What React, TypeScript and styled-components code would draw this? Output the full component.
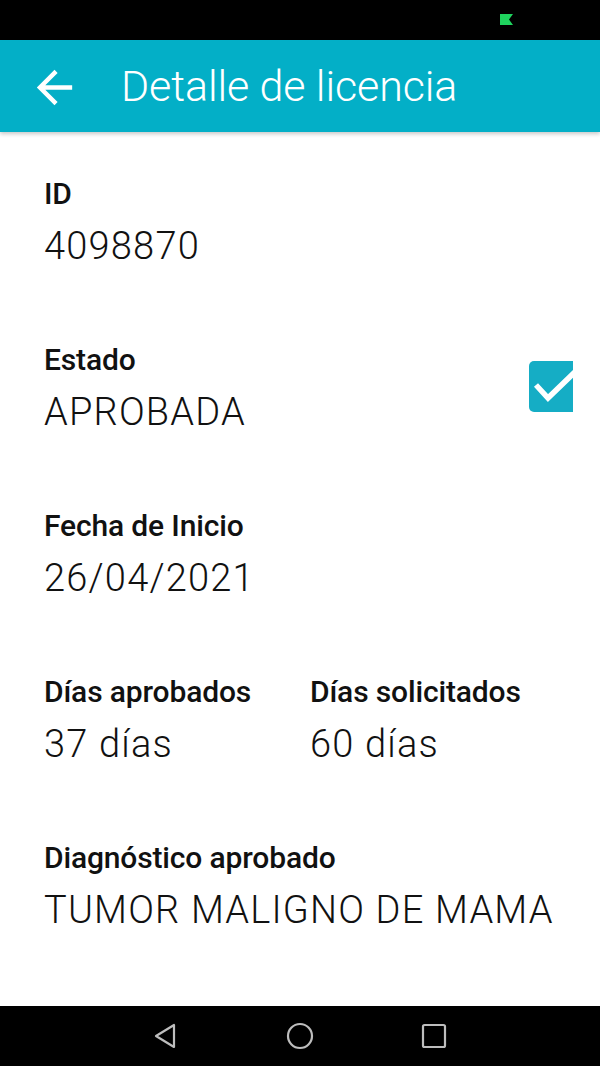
import React from "react";
import styled, { createGlobalStyle } from "styled-components";

const Global = createGlobalStyle`
  html, body { margin: 0; padding: 0; background: #ffffff; }
  body { font-family: Roboto, "Liberation Sans", sans-serif; }
  * { box-sizing: border-box; }
`;

const Screen = styled.div`
  width: 600px;
  height: 1066px;
  display: flex;
  flex-direction: column;
  background: #ffffff;
  overflow: hidden;
`;

const StatusBar = styled.div`
  height: 40px;
  flex: none;
  background: #000000;
  display: flex;
  align-items: flex-start;
  padding: 14px 0 0 500px;
`;

const AppBar = styled.header`
  height: 92px;
  flex: none;
  background: #03afc7;
  display: flex;
  align-items: center;
  padding-left: 28px;
  box-shadow: 0 2px 4px rgba(0, 0, 0, 0.22);
  position: relative;
  z-index: 1;
`;

const BackButton = styled.div`
  width: 53px;
  height: 53px;
  display: flex;
  margin-top: 2px;
  margin-right: 40px;
`;

const Title = styled.h1`
  margin: 0;
  font-family: Roboto, "Liberation Sans", sans-serif;
  font-weight: 300;
  font-size: 43px;
  letter-spacing: -0.1px;
  color: #ffffff;
`;

const Content = styled.main`
  flex: 1;
  display: flex;
  flex-direction: column;
  gap: 73px;
  padding: 44px 27px 0 44px;
`;

const Field = styled.div`
  display: flex;
  flex-direction: column;
  gap: 11px;
`;

const Label = styled.div`
  font-family: Roboto, "Liberation Sans", sans-serif;
  font-weight: 500;
  font-size: 30px;
  line-height: 36px;
  color: #111111;
  letter-spacing: -0.15px;
`;

const Value = styled.div`
  font-family: Roboto, "Liberation Sans", sans-serif;
  font-weight: 300;
  font-size: 38px;
  line-height: 46px;
  color: #111111;
  letter-spacing: 1.2px;
`;

const StatusRow = styled.div`
  display: flex;
  justify-content: space-between;
  align-items: center;
`;

const CheckBox = styled.div`
  width: 44px;
  height: 51px;
  margin-top: -5px;
  background: #15adc5;
  border-radius: 5px 0 0 5px;
  overflow: hidden;
  display: flex;
`;

const TwoCols = styled.div`
  display: grid;
  grid-template-columns: 266px 1fr;
`;

const NavBar = styled.nav`
  height: 60px;
  flex: none;
  background: #000000;
  display: flex;
  align-items: center;
  justify-content: center;
  gap: 106px;
`;

const NavIcon = styled.div`
  width: 28px;
  height: 28px;
  display: flex;
`;

export default function App() {
  return (
    <>
      <Global />
      <Screen>
        <StatusBar>
          <svg width="13" height="11" viewBox="0 0 13 11">
            <polygon points="0,0 13,0 9,5.5 13,11 0,11" fill="#1fd35e" />
          </svg>
        </StatusBar>
        <AppBar>
          <BackButton>
            <svg width="53" height="53" viewBox="0 0 24 24">
              <path
                d="M20 11H7.83l5.59-5.59L12 4l-8 8 8 8 1.41-1.41L7.83 13H20v-2z"
                fill="#ffffff"
              />
            </svg>
          </BackButton>
          <Title>Detalle de licencia</Title>
        </AppBar>
        <Content>
          <Field>
            <Label>ID</Label>
            <Value>4098870</Value>
          </Field>
          <StatusRow>
            <Field>
              <Label>Estado</Label>
              <Value>APROBADA</Value>
            </Field>
            <CheckBox>
              <svg width="44" height="51" viewBox="0 0 44 51">
                <polyline
                  points="7,24 19,37 46,11"
                  fill="none"
                  stroke="#ffffff"
                  strokeWidth="5.5"
                />
              </svg>
            </CheckBox>
          </StatusRow>
          <Field>
            <Label>Fecha de Inicio</Label>
            <Value>26/04/2021</Value>
          </Field>
          <TwoCols>
            <Field>
              <Label>Días aprobados</Label>
              <Value>37 días</Value>
            </Field>
            <Field>
              <Label>Días solicitados</Label>
              <Value>60 días</Value>
            </Field>
          </TwoCols>
          <Field>
            <Label>Diagnóstico aprobado</Label>
            <Value>TUMOR MALIGNO DE MAMA</Value>
          </Field>
        </Content>
        <NavBar>
          <NavIcon>
            <svg width="28" height="28" viewBox="0 0 28 28">
              <path
                d="M22 3 L22 25 L4 14 Z"
                fill="none"
                stroke="#bdbdbd"
                strokeWidth="2.2"
                strokeLinejoin="round"
              />
            </svg>
          </NavIcon>
          <NavIcon>
            <svg width="28" height="28" viewBox="0 0 28 28">
              <circle cx="14" cy="14" r="12" fill="none" stroke="#bdbdbd" strokeWidth="2.2" />
            </svg>
          </NavIcon>
          <NavIcon>
            <svg width="28" height="28" viewBox="0 0 28 28">
              <rect x="3" y="3" width="22" height="22" rx="1.5" fill="none" stroke="#bdbdbd" strokeWidth="2.2" />
            </svg>
          </NavIcon>
        </NavBar>
      </Screen>
    </>
  );
}
